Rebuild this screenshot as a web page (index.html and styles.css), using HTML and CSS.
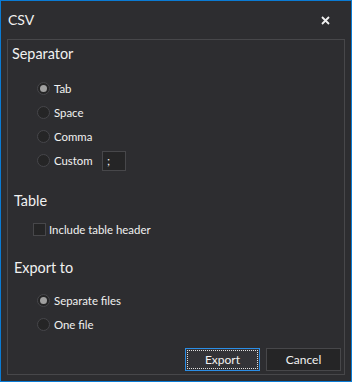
FILE: index.html
```html
<!DOCTYPE html>
<html lang="en">

<head>
    <meta charset="UTF-8">
    <title>CSV</title>
    <link rel="stylesheet" href="styles.css">
</head>

<body>
    <div class="window">
        <div class="titlebar">
            <span class="title">CSV</span>
            <svg class="close" width="9" height="9" viewBox="0 0 9 9">
                <path d="M1 1 L8 8 M8 1 L1 8" stroke="#f1f1f1" stroke-width="1.8" />
            </svg>
        </div>
        <div class="group">
            <div class="heading heading-first">Separator</div>
            <div class="options">
                <label class="option"><span class="radio checked"></span>Tab</label>
                <label class="option"><span class="radio"></span>Space</label>
                <label class="option"><span class="radio"></span>Comma</label>
                <label class="option"><span class="radio"></span><span class="custom-label">Custom</span><span class="textbox">;</span></label>
            </div>

            <div class="heading heading-table">Table</div>
            <div class="options options-check">
                <label class="option"><span class="checkbox"></span>Include table header</label>
            </div>

            <div class="heading heading-export">Export to</div>
            <div class="options options-export">
                <label class="option"><span class="radio checked"></span>Separate files</label>
                <label class="option"><span class="radio"></span>One file</label>
            </div>

            <div class="button-row">
                <button class="btn btn-primary">Export</button>
                <button class="btn">Cancel</button>
            </div>
        </div>
    </div>
</body>

</html>
```

FILE: styles.css
```css
html, body {
    margin: 0;
    padding: 0;
    background: #2d2d30;
}

body {
    font-family: 'Lato', 'Liberation Sans', sans-serif;
    color: #f1f1f1;
}

.window {
    width: 352px;
    height: 382px;
    box-sizing: border-box;
    border: 1px solid #0a7bd4;
    display: flex;
    flex-direction: column;
}

.titlebar {
    height: 38px;
    box-sizing: border-box;
    padding: 11px 21px 0 7px;
    display: flex;
    justify-content: space-between;
    align-items: flex-start;
}

.title {
    font-size: 14px;
    line-height: 16px;
}

.close {
    margin-top: 4px;
}

.group {
    flex: 1;
    margin: 0 6px 6px 6px;
    border: 1px solid #47474a;
    padding: 0 3px 3px 0;
    display: flex;
    flex-direction: column;
}

.heading {
    font-size: 14.4px;
    line-height: 18px;
    padding-left: 6px;
}

.heading-first {
    margin-top: 5px;
    padding-left: 4px;
}

.heading-table {
    margin-top: 20px;
}

.heading-export {
    margin-top: 18px;
}

.options {
    margin-top: 13px;
    padding-left: 29px;
}

.options-check {
    margin-top: 7px;
    padding-left: 25px;
}

.options-export {
    margin-top: 11px;
}

.option {
    display: flex;
    align-items: center;
    height: 24px;
    font-size: 11.4px;
}

.radio {
    width: 13px;
    height: 13px;
    box-sizing: border-box;
    border-radius: 50%;
    border: 1px solid #46464a;
    background: #252526;
    margin-right: 4px;
    display: flex;
    align-items: center;
    justify-content: center;
}

.radio.checked::after {
    content: "";
    width: 7px;
    height: 7px;
    border-radius: 50%;
    background: #a0a0a0;
}

.checkbox {
    width: 13px;
    height: 13px;
    box-sizing: border-box;
    border: 1px solid #47474a;
    background: #252526;
    margin-right: 3px;
}

.custom-label {
    width: 48px;
}

.textbox {
    width: 24px;
    height: 20px;
    box-sizing: border-box;
    border: 1px solid #47474a;
    background: #252526;
    margin-top: 2px;
    padding: 2px 0 0 4px;
    font-size: 12px;
    line-height: 14px;
}

.button-row {
    margin-top: auto;
    display: flex;
    justify-content: flex-end;
    gap: 6px;
}

.btn {
    width: 75px;
    height: 23px;
    box-sizing: border-box;
    border: 1px solid #47474a;
    background: #252526;
    color: #f1f1f1;
    font-family: 'Lato', 'Liberation Sans', sans-serif;
    font-size: 12px;
    padding: 0;
}

.btn-primary {
    background: #333337;
    border-color: #2b8ee6;
    outline: 1px dotted #e0e0e0;
    outline-offset: -3px;
}
```
